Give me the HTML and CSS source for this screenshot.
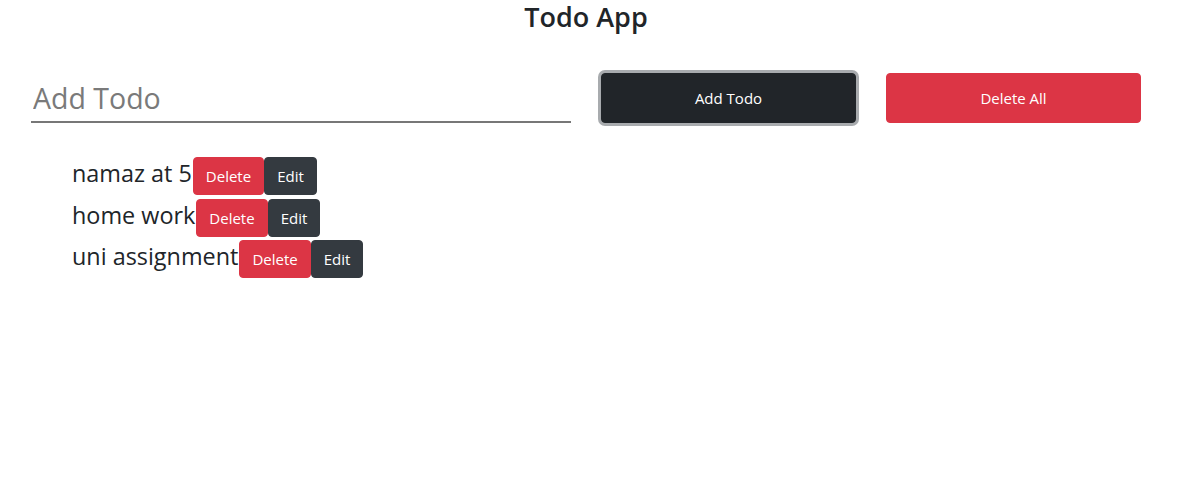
FILE: index.html
```html
<!DOCTYPE html>
<html>
<head>
<meta charset="utf-8">
<title>Todo App</title>
<link rel="stylesheet" href="styles.css">
</head>
<body>
<div class="app">
  <h1 class="title">Todo App</h1>
  <div class="form-row">
    <div class="col col-input"><input class="todo-input" type="text" placeholder="Add Todo"></div>
    <div class="col"><button class="btn btn-dark btn-wide focused">Add Todo</button></div>
    <div class="col"><button class="btn btn-danger btn-wide">Delete All</button></div>
  </div>
  <ul class="todo-list">
    <li class="todo-item"><span class="todo-text">namaz at 5</span><button class="btn btn-danger">Delete</button><button class="btn btn-edit">Edit</button></li>
    <li class="todo-item"><span class="todo-text">home work</span><button class="btn btn-danger">Delete</button><button class="btn btn-edit">Edit</button></li>
    <li class="todo-item"><span class="todo-text">uni assignment</span><button class="btn btn-danger">Delete</button><button class="btn btn-edit">Edit</button></li>
  </ul>
</div>
</body>
</html>
```
FILE: styles.css
```css
* { box-sizing: border-box; }
body {
  margin: 0;
  font-family: "Open Sans", "Noto Sans", sans-serif;
  color: #212529;
  background: #fff;
}
.app {
  width: 1172px;
  padding: 0 16px;
}
.title {
  margin: 0;
  text-align: center;
  font-size: 27px;
  font-weight: 600;
  line-height: 33px;
}
.form-row {
  display: grid;
  grid-template-columns: 2fr 1fr 1fr;
  margin-top: 40px;
}
.col {
  padding: 0 15px;
}
.todo-input {
  width: 100%;
  height: 50px;
  border: none;
  border-bottom: 2px solid #777;
  outline: none;
  padding: 2px 2px 0;
  font-family: inherit;
  font-size: 28.5px;
  color: #495057;
}
.todo-input::placeholder { color: #7a7a7a; }
.btn {
  border: 1px solid transparent;
  border-radius: 4px;
  padding: 6px 12px;
  font-family: inherit;
  font-size: 15px;
  line-height: 24px;
  color: #fff;
  cursor: pointer;
}
.btn-wide {
  width: 100%;
  height: 50px;
  font-size: 15px;
}
.btn-dark { background: #212529; border-color: #212529; }
.btn-danger { background: #dc3545; border-color: #dc3545; }
.btn-edit { background: #343a40; border-color: #343a40; }
.focused { box-shadow: 0 0 0 3px #a8abae; }
.todo-list {
  list-style: none;
  margin: 34px 0 0;
  padding: 0 0 0 56px;
}
.todo-item {
  display: flex;
  align-items: baseline;
  margin-bottom: 3.5px;
}
.todo-text {
  font-size: 23.4px;
  margin-right: 1px;
}
```
